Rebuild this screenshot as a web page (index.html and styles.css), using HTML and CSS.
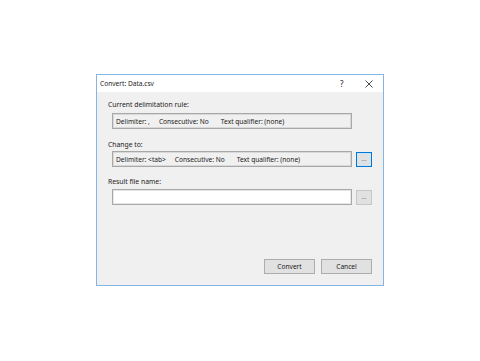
FILE: index.html
```html
<!DOCTYPE html>
<html>
<head>
<meta charset="utf-8">
<link rel="stylesheet" href="styles.css">
</head>
<body>
<div class="dialog">
  <div class="titlebar">
    <span class="title">Convert: Data.csv</span>
    <span class="help">?</span>
    <span class="close"><svg width="8" height="8" viewBox="0 0 8 8"><path d="M0.5 0.5L7.5 7.5M7.5 0.5L0.5 7.5" stroke="#333" stroke-width="0.9"/></svg></span>
  </div>
  <div class="content">
    <div class="label l1">Current delimitation rule:</div>
    <div class="row">
      <div class="box ro"><span class="f1">Delimiter: ,</span><span class="f2">Consecutive: No</span><span>Text qualifier: (none)</span></div>
    </div>
    <div class="label l2">Change to:</div>
    <div class="row">
      <div class="box ro"><span class="f1">Delimiter: &lt;tab&gt;</span><span class="f2">Consecutive: No</span><span>Text qualifier: (none)</span></div>
      <div class="dots focus">...</div>
    </div>
    <div class="label l3">Result file name:</div>
    <div class="row">
      <div class="box white"></div>
      <div class="dots">...</div>
    </div>
    <div class="spacer"></div>
    <div class="buttons">
      <div class="btn">Convert</div>
      <div class="btn">Cancel</div>
    </div>
  </div>
</div>
</body>
</html>
```
FILE: styles.css
```css
html, body {
  margin: 0;
  padding: 0;
  background: #ffffff;
}
body {
  padding: 74px 0 0 96px;
  font-family: "Noto Sans", "Open Sans", sans-serif;
  font-size: 6.8px;
  color: #1a1a1a;
}
.dialog {
  width: 288px;
  height: 212px;
  box-sizing: border-box;
  border: 1px solid #86b4e4;
  background: #f0f0f0;
  display: flex;
  flex-direction: column;
}
.titlebar {
  height: 17px;
  background: #ffffff;
  display: flex;
  align-items: center;
  padding-left: 3px;
}
.title {
  flex: 1;
  font-size: 6.6px;
}
.help {
  width: 8px;
  margin-right: 17px;
  font-size: 8px;
}
.close {
  width: 8px;
  height: 8px;
  margin-right: 10px;
  display: flex;
}
.content {
  flex: 1;
  display: flex;
  flex-direction: column;
  padding: 0 11px 11px 11px;
}
.label {
  height: 11px;
  line-height: 11px;
}
.l1 { margin-top: 7px; margin-bottom: 3px; }
.l2 { margin-top: 10px; margin-bottom: 1px; }
.l3 { margin-top: 9px; margin-bottom: 2px; }
.row {
  display: flex;
  align-items: center;
  gap: 4px;
  margin-left: 4px;
}
.box {
  width: 240px;
  height: 16px;
  box-sizing: border-box;
  border: 1px solid #a8a8a8;
  box-shadow: inset 0 0 0 1px #d9d9d9;
  display: flex;
  align-items: center;
  padding-left: 3px;
  font-size: 6.6px;
}
.f1 { margin-right: 9px; }
.f2 { margin-right: 12px; }
.ro { background: #f0f0f0; }
.white { background: #ffffff; box-shadow: inset 0 0 0 1px #e6e6e6; }
.dots {
  width: 16px;
  height: 15px;
  box-sizing: border-box;
  border: 1px solid #c6c6c6;
  background: #e1e1e1;
  display: flex;
  align-items: center;
  justify-content: center;
  font-size: 6px;
  line-height: 1;
  color: #555;
}
.dots.focus {
  border: 1px solid #0078d7;
  box-shadow: inset 0 0 0 1px #cce4f7;
}
.spacer { flex: 1; }
.buttons {
  display: flex;
  justify-content: flex-end;
  gap: 6px;
}
.btn {
  width: 51px;
  height: 15px;
  box-sizing: border-box;
  border: 1px solid #adadad;
  background: #e1e1e1;
  display: flex;
  align-items: center;
  justify-content: center;
  font-size: 6.6px;
}
```
